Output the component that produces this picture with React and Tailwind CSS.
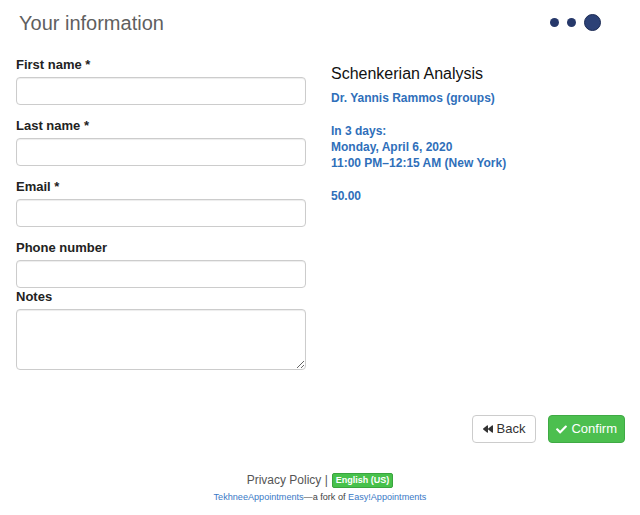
import { FaBackward, FaCheck } from "react-icons/fa";

const fields = [
  { label: "First name *", mb: "mb-3" },
  { label: "Last name *", mb: "mb-3" },
  { label: "Email *", mb: "mb-3" },
  { label: "Phone number", mb: "mb-0" },
];

export default function App() {
  return (
    <div className="w-[640px] h-[515px] bg-white overflow-hidden font-['Liberation_Sans',Arial,sans-serif] text-[#333]">
      {/* header */}
      <div className="flex items-center justify-between h-[44px] pl-[19px] pr-[39px]">
        <h2 className="text-[20px] leading-none pt-[2px] text-[#5f5f5f]">Your information</h2>
        <div className="flex items-center gap-[8px]">
          <span className="w-[9px] h-[9px] rounded-full bg-[#26386a]"></span>
          <span className="w-[9px] h-[9px] rounded-full bg-[#26386a]"></span>
          <span className="w-[17px] h-[17px] rounded-full bg-[#2c4176] border border-[#1c2b55]"></span>
        </div>
      </div>

      <div className="flex pt-[12px]">
        {/* form */}
        <div className="w-[290px] ml-[16px]">
          {fields.map((f) => (
            <div key={f.label} className={f.mb}>
              <label className="block text-[13px] leading-[18px] font-bold text-[#222] mb-[3px]">{f.label}</label>
              <input className="block w-full h-[28px] border border-[#ccc] rounded-[4px] shadow-[inset_0_1px_1px_rgba(0,0,0,0.075)] px-2 text-[13px] outline-none" />
            </div>
          ))}
          <label className="block text-[13px] leading-[18px] font-bold text-[#222] mb-[3px]">Notes</label>
          <textarea className="block w-full h-[61px] border border-[#ccc] rounded-[4px] shadow-[inset_0_1px_1px_rgba(0,0,0,0.075)] px-2 text-[13px] outline-none"></textarea>
        </div>

        {/* appointment details */}
        <div className="ml-[25px] pt-[9px]">
          <div className="text-[16px] leading-[18px] text-[#111]">Schenkerian Analysis</div>
          <div className="mt-[7px] text-[12px] leading-[16.3px] font-bold text-[#2f6fba]">
            Dr. Yannis Rammos (groups)
            <br />
            <br />
            In 3 days:
            <br />
            Monday, April 6, 2020
            <br />
            11:00 PM–12:15 AM (New York)
            <br />
            <br />
            50.00
          </div>
        </div>
      </div>

      {/* buttons */}
      <div className="flex justify-end gap-[12px] pr-[15px] mt-[45px]">
        <button className="flex items-center gap-[4px] h-[28px] px-[10px] bg-white border border-[#ccc] rounded-[4px] text-[13px] text-[#333]">
          <FaBackward className="w-[10px] h-[10px]" />
          Back
        </button>
        <button className="flex items-center gap-[4px] h-[28px] px-[7px] bg-[#4cbf4f] border border-[#3faa44] rounded-[4px] text-[13px] text-white">
          <FaCheck className="w-[11px] h-[11px]" />
          Confirm
        </button>
      </div>

      {/* footer */}
      <div className="flex flex-col items-center mt-[29px]">
        <div className="flex items-center text-[12px] leading-[16px] text-[#555]">
          <span>Privacy Policy |</span>
          <span className="ml-[4px] px-[3px] py-[1px] rounded-[2px] bg-[#47c14b] border border-[#3aa43e] text-white text-[9px] leading-[11px] font-bold">English (US)</span>
        </div>
        <div className="mt-[3px] text-[9.1px] leading-[12px] text-[#444]">
          <span className="text-[#3a79c6]">TekhneeAppointments</span>—a fork of{" "}
          <span className="text-[#3a79c6]">Easy!Appointments</span>
        </div>
      </div>
    </div>
  );
}
